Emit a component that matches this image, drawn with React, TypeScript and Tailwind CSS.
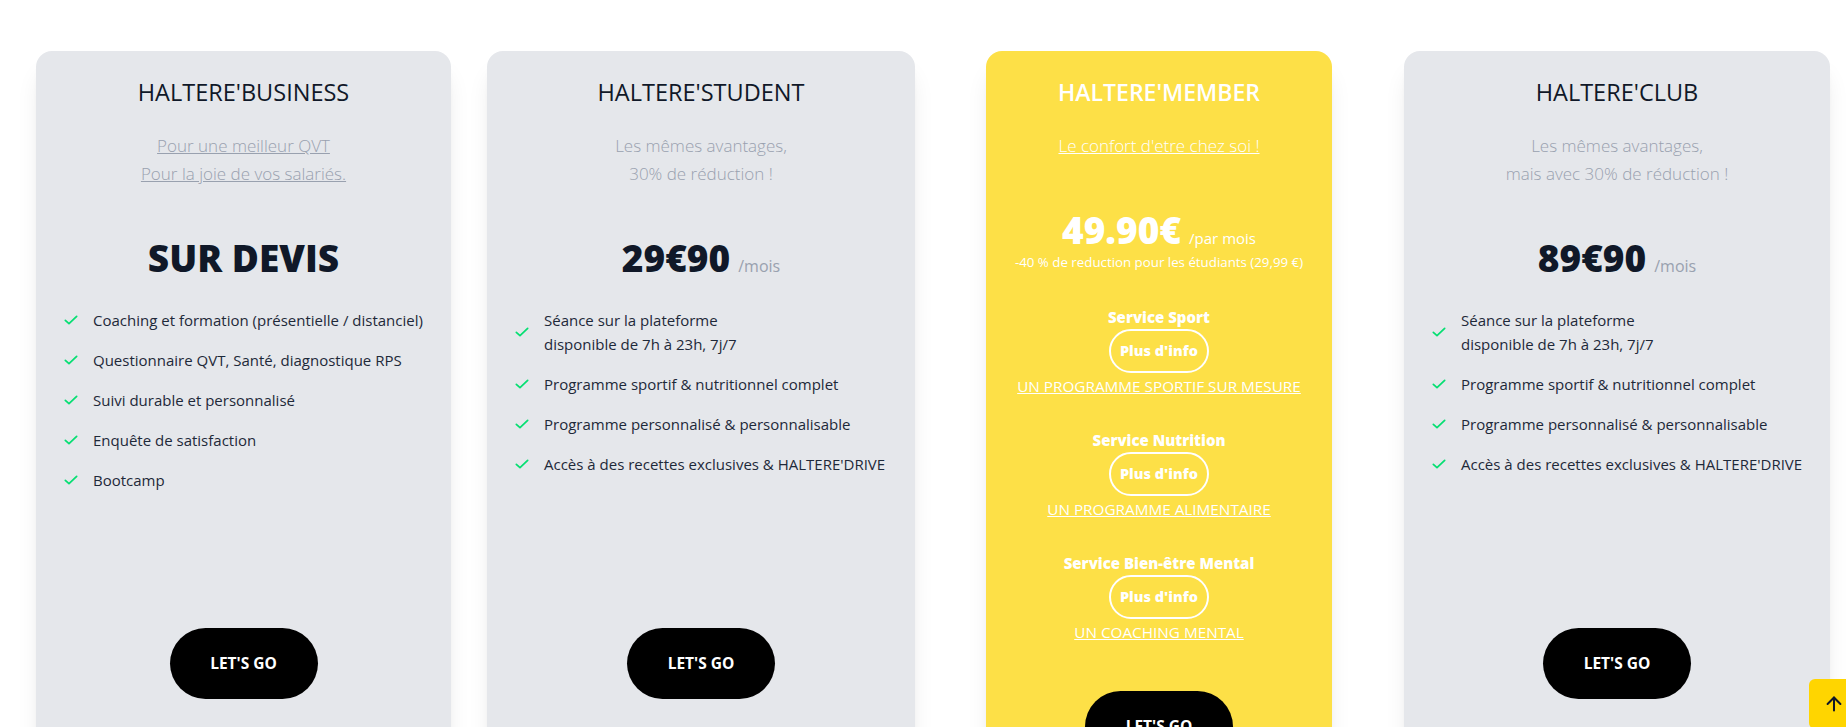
import { ArrowUp } from "lucide-react";

type Plan = {
  name: string;
  lines: string[];
  underline?: boolean;
  price: string;
  unit?: string;
  features: string[][];
  box: string;
};

const plans: Plan[] = [
  {
    name: "HALTERE'BUSINESS",
    lines: ["Pour une meilleur QVT", "Pour la joie de vos salariés."],
    underline: true,
    price: "SUR DEVIS",
    features: [
      ["Coaching et formation (présentielle / distanciel)"],
      ["Questionnaire QVT, Santé, diagnostique RPS"],
      ["Suivi durable et personnalisé"],
      ["Enquête de satisfaction"],
      ["Bootcamp"],
    ],
    box: "w-[415px]",
  },
  {
    name: "HALTERE'STUDENT",
    lines: ["Les mêmes avantages,", "30% de réduction !"],
    price: "29€90",
    unit: "/mois",
    features: [
      ["Séance sur la plateforme", "disponible de 7h à 23h, 7j/7"],
      ["Programme sportif & nutritionnel complet"],
      ["Programme personnalisé & personnalisable"],
      ["Accès à des recettes exclusives & HALTERE'DRIVE"],
    ],
    box: "w-[428px] ml-[36px]",
  },
  {
    name: "HALTERE'CLUB",
    lines: ["Les mêmes avantages,", "mais avec 30% de réduction !"],
    price: "89€90",
    unit: "/mois",
    features: [
      ["Séance sur la plateforme", "disponible de 7h à 23h, 7j/7"],
      ["Programme sportif & nutritionnel complet"],
      ["Programme personnalisé & personnalisable"],
      ["Accès à des recettes exclusives & HALTERE'DRIVE"],
    ],
    box: "w-[426px] ml-[72px]",
  },
];

const services = [
  { title: "Service Sport", link: "UN PROGRAMME SPORTIF SUR MESURE" },
  { title: "Service Nutrition", link: "UN PROGRAMME ALIMENTAIRE" },
  { title: "Service Bien-être Mental", link: "UN COACHING MENTAL" },
];

const Check = () => (
  <svg
    width="16"
    height="16"
    viewBox="0 0 24 24"
    fill="none"
    className="shrink-0 text-green-400"
  >
    <path
      d="M3.5 12.5L9 17.5L20.5 6.5"
      stroke="currentColor"
      strokeWidth="2.6"
      strokeLinecap="round"
      strokeLinejoin="round"
    />
  </svg>
);

const GoButton = () => (
  <button
    type="button"
    className="w-[148px] h-[71px] rounded-full bg-black text-white text-[15.5px] font-bold"
  >
    LET'S GO
  </button>
);

const PlanCard = ({ plan }: { plan: Plan }) => (
  <div
    className={`${plan.box} shrink-0 flex flex-col items-center bg-gray-200 rounded-2xl shadow-xl pt-[25px]`}
  >
    <h3 className="text-[23.5px] leading-8 text-gray-900">{plan.name}</h3>
    <div
      className={`mt-6 text-[17px] leading-7 font-light text-gray-400 text-center ${
        plan.underline ? "underline" : ""
      }`}
    >
      {plan.lines.map((l) => (
        <p key={l}>{l}</p>
      ))}
    </div>
    <div className="mt-[50px] h-10 flex items-baseline gap-2 text-gray-900">
      <span className="text-[37px] leading-10 font-extrabold">{plan.price}</span>
      {plan.unit && (
        <span className="text-[16px] text-gray-400">{plan.unit}</span>
      )}
    </div>
    <ul className="mt-[30px] h-[320px] self-stretch px-[27px] space-y-4">
      {plan.features.map((f) => (
        <li key={f[0]} className="flex items-center gap-[14px]">
          <Check />
          <span className="text-[15px] leading-6 text-gray-800">
            {f.map((l) => (
              <span key={l} className="block">
                {l}
              </span>
            ))}
          </span>
        </li>
      ))}
    </ul>
    <GoButton />
  </div>
);

const MemberCard = () => (
  <div className="w-[346px] ml-[71px] shrink-0 flex flex-col items-center bg-[#fde047] rounded-2xl shadow-xl pt-[25px] pb-12 text-white">
    <h3 className="text-[23px] leading-8 font-semibold">HALTERE'MEMBER</h3>
    <p className="mt-6 text-[17px] leading-7 font-light underline">
      Le confort d'etre chez soi !
    </p>
    <div className="mt-[50px] h-10 flex items-baseline gap-2">
      <span className="text-[37px] leading-10 font-extrabold">49.90€</span>
      <span className="text-[15px]">/par mois</span>
    </div>
    <p className="text-[13.3px] leading-5 mt-[2px]">
      -40 % de reduction pour les étudiants (29,99 €)
    </p>
    <div className="mt-[35px] flex flex-col items-center gap-[32px]">
      {services.map((s) => (
        <div key={s.title} className="flex flex-col items-center">
          <p className="text-[15px] leading-5 font-extrabold">{s.title}</p>
          <button
            type="button"
            className="mt-[2px] w-[100px] h-[44px] rounded-full border-2 border-white text-[14.5px] font-extrabold"
          >
            Plus d'info
          </button>
          <a className="mt-[1px] text-[15.3px] leading-6 underline">{s.link}</a>
        </div>
      ))}
    </div>
    <div className="mt-[47px]">
      <GoButton />
    </div>
  </div>
);

export default function App() {
  return (
    <div className="min-h-screen bg-white font-['Open_Sans',sans-serif] pt-[51px] overflow-hidden">
      <div className="flex items-stretch pl-[36px]">
        <PlanCard plan={plans[0]} />
        <PlanCard plan={plans[1]} />
        <MemberCard />
        <PlanCard plan={plans[2]} />
      </div>
      <button
        type="button"
        className="fixed right-[-13px] bottom-[-2px] w-[50px] h-[50px] rounded-md bg-[#ffd500] flex items-center justify-center"
      >
        <ArrowUp size={22} strokeWidth={2.2} className="text-gray-900" />
      </button>
    </div>
  );
}
